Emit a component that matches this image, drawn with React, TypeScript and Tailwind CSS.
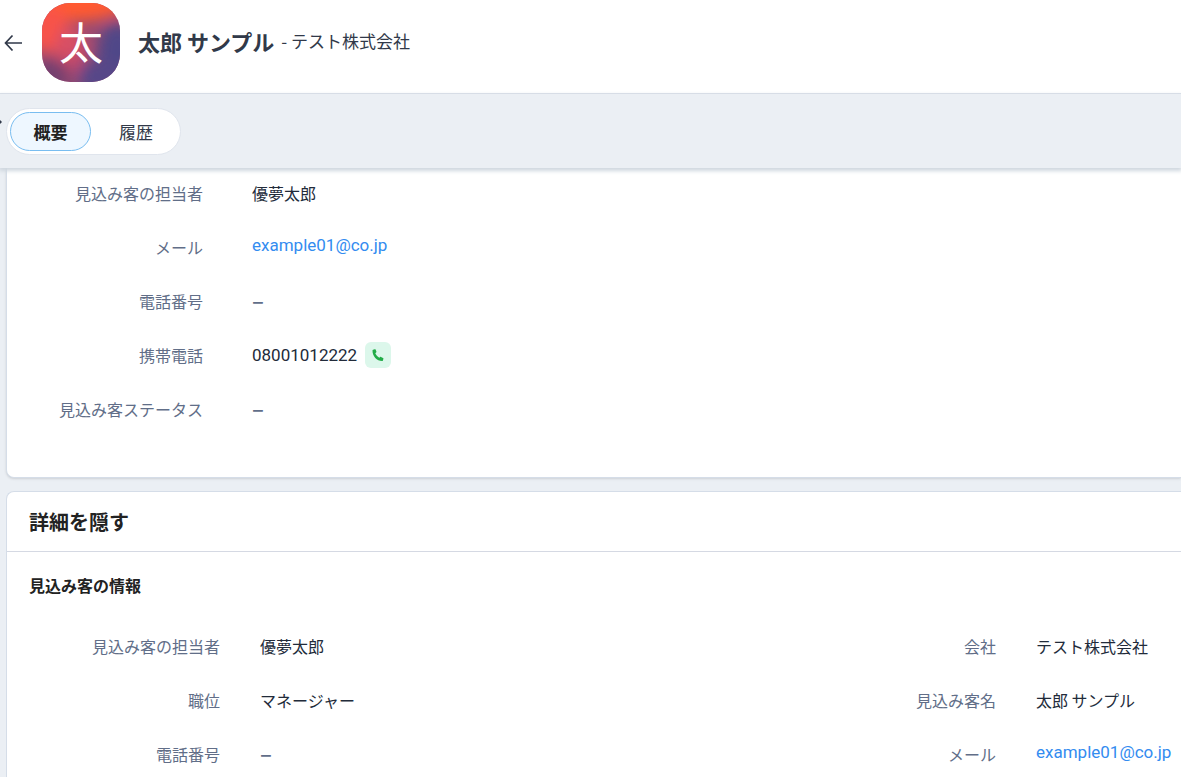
import { ReactNode, useState } from 'react';

interface FieldProps {
  label: string;
  children?: ReactNode;
}

type TabId = 'overview' | 'timeline';

const tabs: { id: TabId; label: string }[] = [
  { id: 'overview', label: '概要' },
  { id: 'timeline', label: '履歴' },
];

const EmailLink = ({ email }: { email: string }) => (
  <a
    href={`mailto:${email}`}
    className="pb-1 font-['Roboto','Noto_Sans_CJK_JP',sans-serif] text-[17px] leading-6 text-[#338cf0]"
  >
    {email}
  </a>
);

const EmptyValue = () => <span className="pb-1 text-[22px] leading-6 font-medium text-[#616e88]">–</span>;

const SummaryField = ({ label, children }: FieldProps) => (
  <div className="flex h-[54px] items-center gap-[49px]">
    <dt className="w-[172px] shrink-0 text-right text-[#616e88]">{label}</dt>
    <dd className="flex items-center">{children ?? <EmptyValue />}</dd>
  </div>
);

const DetailField = ({ label, children }: FieldProps) => (
  <div className="flex h-[54px] items-center gap-10">
    <dt className="w-[190px] shrink-0 text-right text-[#616e88]">{label}</dt>
    <dd className="flex items-center whitespace-nowrap">{children ?? <EmptyValue />}</dd>
  </div>
);

const Avatar = () => (
  <div className="relative flex h-[79px] w-[78px] shrink-0 items-center justify-center overflow-hidden rounded-[28px]">
    <svg viewBox="0 0 79 79" className="absolute inset-0 size-full" preserveAspectRatio="none" aria-hidden="true">
      <defs>
        <filter id="soft" x="-50%" y="-50%" width="200%" height="200%">
          <feGaussianBlur stdDeviation="7" />
        </filter>
      </defs>
      <rect width="79" height="79" fill="#984a70" />
      <g filter="url(#soft)">
        <ellipse cx="32" cy="0" rx="56" ry="18" fill="#ff5a30" />
        <ellipse cx="6" cy="26" rx="20" ry="24" fill="#f8524a" />
        <ellipse cx="28" cy="44" rx="16" ry="20" fill="#d85065" />
        <ellipse cx="34" cy="60" rx="8" ry="12" fill="#c24a6c" />
        <ellipse cx="76" cy="50" rx="19" ry="30" fill="#4f4788" />
        <ellipse cx="60" cy="74" rx="24" ry="18" fill="#564788" />
        <ellipse cx="8" cy="72" rx="20" ry="17" fill="#74406f" />
      </g>
    </svg>
    <span className="relative pb-1 text-[44px] leading-none text-white">太</span>
  </div>
);

export default function App() {
  const [activeTab, setActiveTab] = useState<TabId>('overview');

  return (
    <div className="min-h-screen overflow-x-hidden bg-[#ebeff4] font-['Noto_Sans_CJK_JP',sans-serif] text-base leading-6 text-[#222b3a]">
      <header className="flex h-[94px] items-start border-b border-[#d9dfe8] bg-white pt-[3px]">
        <button type="button" aria-label="戻る" className="mt-[30px] ml-1 w-[38px] text-[#313949]">
          <svg width="19" height="20" viewBox="0 0 19 20" fill="none" stroke="currentColor" strokeWidth="1.7">
            <path d="M18 10H1.5M8.5 2.5L1.5 10L8.5 17.5" />
          </svg>
        </button>
        <Avatar />
        <h1 className="ml-[18px] flex h-[75px] items-center gap-[7px] text-[#313949]">
          <span className="text-[22px] font-bold">太郎 サンプル</span>
          <span className="text-[17px]">- テスト株式会社</span>
        </h1>
      </header>

      <nav className="relative z-10 h-[74px] bg-[#ebeff4] pt-[14px] pl-[6px] shadow-[0_2px_4px_1px_#cfd7df]">
        <svg className="absolute top-[24px] left-0" width="2" height="8" viewBox="0 0 2 8" aria-hidden="true">
          <path d="M-3 0L1 4L-3 8" fill="none" stroke="#313949" strokeWidth="1.5" />
        </svg>
        <div role="tablist" className="inline-flex h-[47px] gap-1 rounded-full border border-[#e0e5ed] bg-white p-[3px]">
          {tabs.map((tab) => (
            <button
              key={tab.id}
              type="button"
              role="tab"
              aria-selected={activeTab === tab.id}
              onClick={() => setActiveTab(tab.id)}
              className={
                activeTab === tab.id
                  ? 'w-[81px] rounded-full border border-[#79bdf0] bg-[#eef7ff] text-[17px] font-bold text-[#222]'
                  : 'w-[82px] rounded-full text-[17px] text-[#313949]'
              }
            >
              {tab.label}
            </button>
          ))}
        </div>
      </nav>

      {/* the first card slides slightly under the tab bar */}
      <main className="-mt-[2px] pl-[6px]">
        <section className="rounded-bl-lg border-b border-l border-[#d5dde8] bg-white pb-[41px] pl-6 shadow-sm">
          <dl>
            <SummaryField label="見込み客の担当者">優夢太郎</SummaryField>
            <SummaryField label="メール">
              <EmailLink email="example01@co.jp" />
            </SummaryField>
            <SummaryField label="電話番号" />
            <SummaryField label="携帯電話">
              <span className="font-['Roboto','Noto_Sans_CJK_JP',sans-serif] text-[17px]">08001012222</span>
              <button
                type="button"
                aria-label="電話をかける"
                className="ml-2 flex size-[26px] items-center justify-center rounded-md bg-[#dcf7eb] text-[#22ac48]"
              >
                <svg width="12" height="13" viewBox="0 0 12 13" fill="currentColor">
                  <path d="M1.1.7 2.7.2c.4-.1.7.1.9.4l.8 2c.1.4 0 .7-.3.9l-.8.7c.8 1.8 2.1 3.4 4 4.5l.8-.7c.3-.2.6-.3.9-.1l2 1c.4.2.5.5.4.8l-.5 1.7c-.1.4-.4.7-.8.7C4.9 12.1.3 7.4.5 1.6c0-.4.2-.8.6-.9Z" />
                </svg>
              </button>
            </SummaryField>
            <SummaryField label="見込み客ステータス" />
          </dl>
        </section>

        <section className="mt-[13px] min-h-[300px] rounded-tl-lg border-t border-l border-[#d5dde8] bg-white">
          <h2 className="flex h-[60px] items-center border-b border-[#d5d9e3] pl-[22px] text-xl font-bold text-[#222]">
            詳細を隠す
          </h2>
          <h3 className="pt-[21px] pl-[22px] font-bold text-[#222]">見込み客の情報</h3>
          <div className="mt-[22px] grid grid-cols-[776px_1fr] pl-[23px]">
            <dl>
              <DetailField label="見込み客の担当者">優夢太郎</DetailField>
              <DetailField label="職位">マネージャー</DetailField>
              <DetailField label="電話番号" />
            </dl>
            <dl>
              <DetailField label="会社">テスト株式会社</DetailField>
              <DetailField label="見込み客名">太郎 サンプル</DetailField>
              <DetailField label="メール">
                <EmailLink email="example01@co.jp" />
              </DetailField>
            </dl>
          </div>
        </section>
      </main>
    </div>
  );
}
